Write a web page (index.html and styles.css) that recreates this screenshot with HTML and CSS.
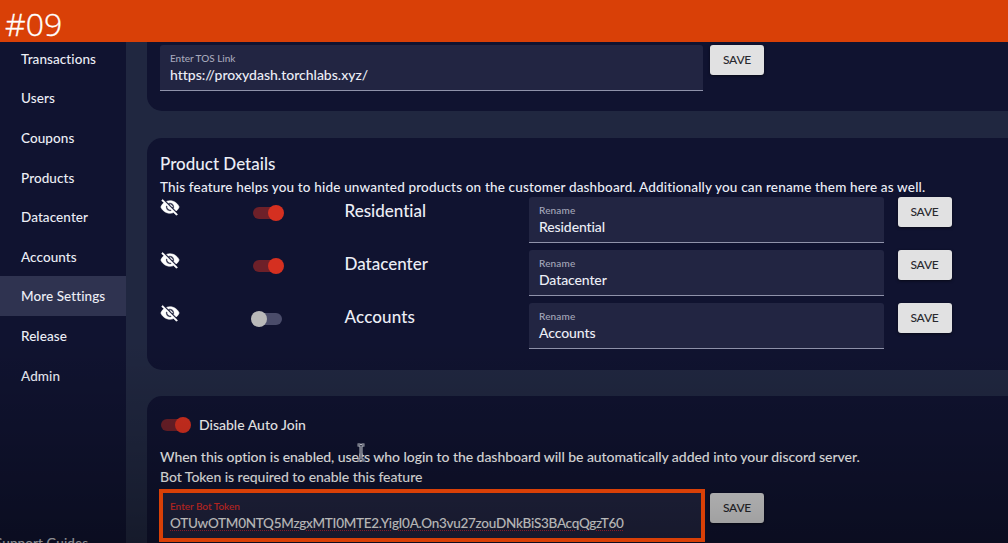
FILE: index.html
```html
<!DOCTYPE html>
<html lang="en">
<head>
<meta charset="utf-8">
<title>More Settings</title>
<link rel="stylesheet" href="styles.css">
</head>
<body>
<svg class="defs" width="0" height="0">
  <symbol id="eye-off" viewBox="0 0 24 24"><path fill="currentColor" stroke="currentColor" stroke-width=".7" d="M12 7c2.76 0 5 2.24 5 5 0 .65-.13 1.26-.36 1.83l2.92 2.92c1.51-1.26 2.7-2.89 3.43-4.75-1.73-4.39-6-7.5-11-7.5-1.4 0-2.74.25-3.98.7l2.16 2.16C10.74 7.13 11.35 7 12 7zM2 4.27l2.28 2.28.46.46C3.08 8.3 1.78 10.02 1 12c1.73 4.39 6 7.5 11 7.5 1.55 0 3.03-.3 4.38-.84l.42.42L19.73 22 21 20.73 3.27 3 2 4.27zM7.53 9.8l1.55 1.55c-.05.21-.08.43-.08.65 0 1.66 1.34 3 3 3 .22 0 .44-.03.65-.08l1.55 1.55c-.67.33-1.41.53-2.2.53-2.76 0-5-2.24-5-5 0-.79.2-1.53.53-2.2zm4.31-.78l3.15 3.15.02-.16c0-1.66-1.34-3-3-3l-.17.01z"/></symbol>
</svg>
<header class="banner">#09</header>
<div class="app">
  <nav class="sidebar">
    <a class="nav-item">Transactions</a>
    <a class="nav-item">Users</a>
    <a class="nav-item">Coupons</a>
    <a class="nav-item">Products</a>
    <a class="nav-item">Datacenter</a>
    <a class="nav-item">Accounts</a>
    <a class="nav-item active">More Settings</a>
    <a class="nav-item">Release</a>
    <a class="nav-item">Admin</a>
    <a class="guides">Support Guides</a>
  </nav>
  <main class="content">
    <section class="card links">
      <div class="field wide"><label>Enter TOS Link</label><span class="value url">https://proxydash.torchlabs.xyz/</span></div>
      <button class="save">SAVE</button>
    </section>
    <section class="card products">
      <h2>Product Details</h2>
      <p class="note">This feature helps you to hide unwanted products on the customer dashboard. Additionally you can rename them here as well.</p>
      <div class="row">
        <svg class="eye"><use href="#eye-off"/></svg>
        <span class="toggle on"></span>
        <span class="name">Residential</span>
        <div class="field"><label>Rename</label><span class="value">Residential</span></div>
        <button class="save">SAVE</button>
      </div>
      <div class="row">
        <svg class="eye"><use href="#eye-off"/></svg>
        <span class="toggle on"></span>
        <span class="name">Datacenter</span>
        <div class="field"><label>Rename</label><span class="value">Datacenter</span></div>
        <button class="save">SAVE</button>
      </div>
      <div class="row">
        <svg class="eye"><use href="#eye-off"/></svg>
        <span class="toggle"></span>
        <span class="name accounts">Accounts</span>
        <div class="field"><label>Rename</label><span class="value">Accounts</span></div>
        <button class="save">SAVE</button>
      </div>
    </section>
    <section class="card bot">
      <div class="join"><span class="toggle on"></span><span class="join-label">Disable Auto Join</span></div>
      <p class="line first">When this option is enabled, users who login to the dashboard will be automatically added into your discord server.</p>
      <p class="line second">Bot Token is required to enable this feature</p>
      <div class="token-row">
        <div class="field wide token"><label>Enter Bot Token</label><span class="value code">OTUwOTM0NTQ5MzgxMTI0MTE2.YigI0A.On3vu27zouDNkBiS3BAcqQgzT60</span></div>
        <button class="save">SAVE</button>
      </div>
    </section>
  </main>
</div>
<div class="shade"></div>
<div class="highlight"></div>
<svg class="cursor" viewBox="0 0 10 19"><path d="M1.5 2h2.3L5 3l1.2-1h2.3M5 3v13M1.5 17h2.3L5 16l1.2 1h2.3M3.2 12h3.6" stroke="#b4b7c0" stroke-width="3" fill="none"/><path d="M1.5 2h2.3L5 3l1.2-1h2.3M5 3v13M1.5 17h2.3L5 16l1.2 1h2.3" stroke="#191c30" stroke-width=".8" fill="none"/></svg>
</body>
</html>
```
FILE: styles.css
```css
* { box-sizing: border-box; }
body {
  margin: 0;
  height: 543px;
  overflow: hidden;
  position: relative;
  background: #202740;
  color: #eceef6;
  font-family: Lato, "Open Sans", sans-serif;
  font-weight: 500;
  font-variant-ligatures: none;
}
.defs { position: absolute; }
.banner {
  position: relative;
  z-index: 3;
  height: 42px;
  padding-left: 5px;
  background: #d94007;
  color: #fff;
  font: 300 32px/47px "Open Sans", "Noto Sans", sans-serif;
  -webkit-text-stroke: .35px #fff;
}
.app { display: flex; height: 501px; }
.sidebar {
  width: 126px;
  flex: none;
  display: flex;
  flex-direction: column;
  margin-top: -3.4px;
  background: #101330;
  font-size: 13.5px;
  letter-spacing: .08px;
}
.nav-item {
  flex: none;
  height: 39.65px;
  padding-left: 21px;
  line-height: 40px;
}
.nav-item.active { background: #2f3350; }
.guides {
  flex: none;
  margin: 133px 0 0 -5px;
  line-height: 30px;
  white-space: nowrap;
  opacity: .8;
}
.content { flex: 1; min-width: 0; padding-left: 21px; }
.card {
  background: #101330;
  border-radius: 15px 0 0 15px;
  padding-left: 13px;
}
.links {
  display: flex;
  gap: 7px;
  height: 69px;
  padding-top: 3px;
  border-top-left-radius: 0;
}
.field {
  display: flex;
  flex-direction: column;
  height: 46px;
  padding: 6px 10px 0;
  background: #222542;
  border-bottom: 1px solid #8f92aa;
  border-radius: 3px 3px 0 0;
}
.field.wide { width: 543px; }
.field label { font-size: 10px; line-height: 15px; color: #a6a8bb; letter-spacing: -.02px; }
.row .field label { letter-spacing: .15px; }
.value { font-size: 14px; line-height: 18px; white-space: nowrap; letter-spacing: -.1px; }
.url { letter-spacing: 0; }
.save {
  width: 54px;
  height: 30px;
  padding: 0;
  border: 0;
  border-radius: 3px;
  background: #e1e1e2;
  color: #29292e;
  font: 500 12px/30px Lato, sans-serif;
  letter-spacing: -.25px;
  box-shadow: 0 1px 3px #0008;
}
.products { height: 232px; margin-top: 27px; padding-top: 15px; }
h2 { margin: 0; font-size: 17px; font-weight: 500; line-height: 22px; }
.note { margin: 3px 0 1px; font-size: 13.5px; line-height: 18px; white-space: nowrap; letter-spacing: .17px; }
.row {
  display: grid;
  grid-template-columns: 93px 91px 185px 355px 54px;
  column-gap: 0;
  align-items: start;
  height: 53px;
}
.row .save { margin-left: 13.5px; }
.eye { width: 20px; height: 20px; color: #fff; }
.toggle {
  position: relative;
  flex: none;
  width: 29px;
  height: 12px;
  margin-top: 9.5px;
  border-radius: 6px;
  background: #4a4c6a;
}
.toggle::after {
  content: "";
  position: absolute;
  left: -2px;
  top: -2px;
  width: 16px;
  height: 16px;
  border-radius: 50%;
  background: #b9b9b9;
}
.toggle.on { background: #6d2029; }
.toggle.on::after { left: 15px; background: #d53020; }
.name { font-size: 17px; line-height: 28px; padding-left: .5px; }
.accounts { letter-spacing: .15px; }
.bot { height: 160px; margin-top: 26px; padding-top: 18px; border-bottom-left-radius: 0; }
.join { display: flex; gap: 9px; padding-left: 1px; height: 22px; }
.join .toggle { margin-top: 4.5px; }
.join .toggle.on::after { left: 14px; }
.join-label { font-size: 14px; line-height: 22px; }
.line { margin: 0; font-size: 14px; line-height: 20px; white-space: nowrap; letter-spacing: -.045px; }
.first { margin-top: 11px; }
.token-row { display: flex; gap: 7px; margin-top: 6px; }
.token label { color: #ee302a; }
.code {
  align-self: flex-start;
  font-size: 13.5px;
  letter-spacing: -.27px;
  text-decoration: underline dotted #c82636 1px;
  text-underline-offset: 2px;
}
.bot, .guides { color: #fff; }
.shade {
  position: absolute;
  z-index: 4;
  inset: 340px 0 0;
  background: linear-gradient(#0000, #0002 45%, #0004 85%, #0005);
}
.highlight {
  position: absolute;
  z-index: 5;
  left: 159px;
  top: 489px;
  width: 546px;
  height: 53px;
  border: 4px solid #d94007;
}
.cursor { position: absolute; z-index: 5; left: 356px; top: 443px; width: 10px; height: 19px; }
```
